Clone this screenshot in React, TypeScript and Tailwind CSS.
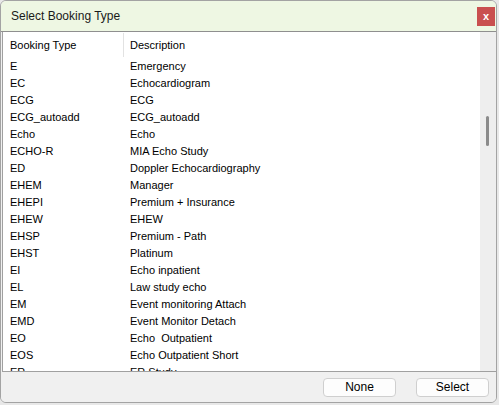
import React from 'react';

const rows: [string, string][] = [
  ['E', 'Emergency'],
  ['EC', 'Echocardiogram'],
  ['ECG', 'ECG'],
  ['ECG_autoadd', 'ECG_autoadd'],
  ['Echo', 'Echo'],
  ['ECHO-R', 'MIA Echo Study'],
  ['ED', 'Doppler Echocardiography'],
  ['EHEM', 'Manager'],
  ['EHEPI', 'Premium + Insurance'],
  ['EHEW', 'EHEW'],
  ['EHSP', 'Premium - Path'],
  ['EHST', 'Platinum'],
  ['EI', 'Echo inpatient'],
  ['EL', 'Law study echo'],
  ['EM', 'Event monitoring Attach'],
  ['EMD', 'Event Monitor Detach'],
  ['EO', 'Echo\u00a0 Outpatient'],
  ['EOS', 'Echo Outpatient Short'],
  ['ER', 'ER Study'],
];

const App: React.FC = () => {
  return (
    <div className="w-[499px] h-[405px] bg-[#e8e8e8] overflow-hidden" style={{ fontFamily: '"Liberation Sans", Arial, sans-serif' }}>
      <div className="w-[497px] h-[403px] flex flex-col border border-[#a3a3a3] rounded-[6px] overflow-hidden bg-[#f0f0f0]">
        {/* Title bar */}
        <div className="h-[31px] shrink-0 flex items-center justify-between bg-[#eef7e3] border-b border-[#8f8f8f] pl-[10px] pr-[1px]">
          <span className="text-[12px] text-[#1a1a1a]">Select Booking Type</span>
          <button className="w-[18px] h-[19px] bg-[#c9504f] text-white text-[11px] font-bold leading-none flex items-center justify-center">
            x
          </button>
        </div>

        {/* List */}
        <div className="flex-1 flex bg-white border-l border-[#a0a0a0] border-b border-b-[#a0a0a0] ml-[1px] min-h-0">
          <div className="flex-1 overflow-hidden text-[11px] text-black">
            <div className="h-[26px] flex items-center">
              <div className="w-[121px] pl-[7px] h-[24px] flex items-center border-r border-[#e2e2e2]">Booking Type</div>
              <div className="pl-[6px]">Description</div>
            </div>
            {rows.map(([code, desc]) => (
              <div key={code} className="h-[17px] flex items-center">
                <div className="w-[121px] pl-[7px] whitespace-nowrap">{code}</div>
                <div className="pl-[6px] whitespace-nowrap">{desc}</div>
              </div>
            ))}
          </div>
          <div className="w-[16px] shrink-0 bg-[#eeeeee] relative">
            <div className="absolute left-[6px] top-[84px] w-[3px] h-[30px] bg-[#8b8b8b] rounded-full" />
          </div>
        </div>

        {/* Footer */}
        <div className="h-[30px] shrink-0 flex items-center justify-end gap-[20px] pr-[7px] bg-[#f0f0f0]">
          <button className="w-[73px] h-[19px] rounded-[4px] border border-[#cfcfcf] bg-[#fdfdfd] text-[12px] text-black leading-none">None</button>
          <button className="w-[73px] h-[19px] rounded-[4px] border border-[#cfcfcf] bg-[#fdfdfd] text-[12px] text-black leading-none">Select</button>
        </div>
      </div>
    </div>
  );
};

export default App;
